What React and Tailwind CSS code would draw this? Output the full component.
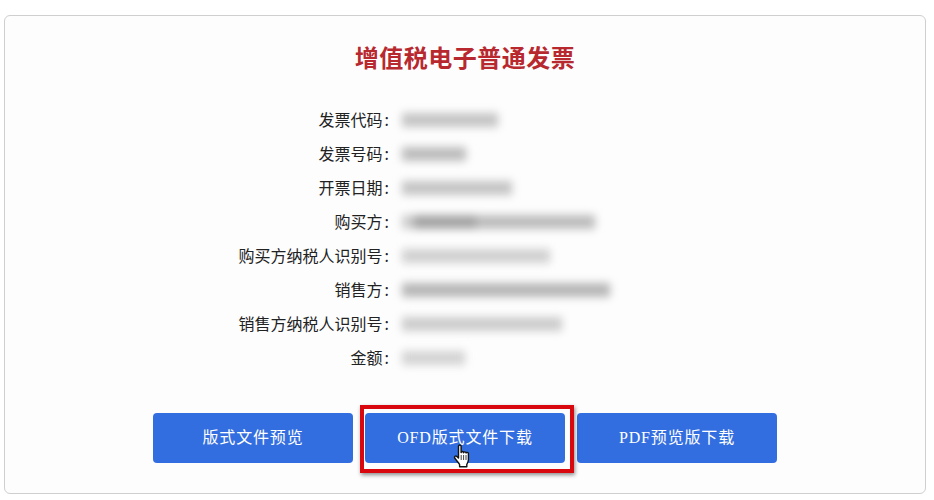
import React from 'react';

const rows = [
  { label: '发票代码', parts: [[96, 'bg-[#c4c4c4]']] },
  { label: '发票号码', parts: [[64, 'bg-[#bcbcbc]']] },
  { label: '开票日期', parts: [[110, 'bg-[#c4c4c4]']] },
  { label: '购买方', parts: [[12, 'bg-[#cccccc]'], [62, 'bg-[#a4a4a4]'], [119, 'bg-[#bcbcbc]']] },
  { label: '购买方纳税人识别号', parts: [[148, 'bg-[#d0d0d0]']] },
  { label: '销售方', parts: [[208, 'bg-[#b6b6b6]']] },
  { label: '销售方纳税人识别号', parts: [[160, 'bg-[#cccccc]']] },
  { label: '金额', parts: [[63, 'bg-[#d3d3d3]']] },
];

function HandCursor() {
  return (
    <svg width="20" height="25" viewBox="0 0 20 25" className="absolute left-[88px] top-[31px] w-[20px] h-[25px]">
      <path
        d="M5.5 2.2c0-1.6 2.6-1.6 2.6 0v6.3c.3-1.400 2.400-1.300 2.500.2.300-1.200 2.300-1.100 2.500.3.400-1 2.200-.8 2.300.6v6.200c0 2-.8 3-1.600 4.600v2.300H6.600v-2.200c-1-1.800-3-3.700-4.900-6.500-.9-1.500 1-2.700 2.200-1.600l1.600 1.700z"
        fill="#fff"
        stroke="#111"
        strokeWidth="1.400"
        strokeLinejoin="round"
      />
      <path d="M8.200 11v5M10.600 11v5M13 11v5" stroke="#111" strokeWidth="0.800" />
    </svg>
  );
}

function ActionButton({ children }) {
  return (
    <button className="w-[200px] h-[50px] rounded-[4px] bg-[#336ee0] text-white text-[16px] tracking-[0.85px] [font-family:'Liberation_Serif','Noto_Sans_CJK_SC',serif]">
      {children}
    </button>
  );
}

export default function App() {
  return (
    <div className="w-[934px] h-[500px] bg-white pt-[15px] pl-[4px] overflow-hidden [font-family:'Noto_Sans_CJK_SC',sans-serif]">
      <div className="w-[922px] h-[479px] rounded-[6px] border border-[#cfcfcf] bg-[#fdfdfe] flex flex-col items-center">
        <h1 className="mt-[26px] h-[34px] leading-[34px] text-[24px] font-bold tracking-[0.5px] text-[#b8292f] [font-family:'Liberation_Serif','Noto_Sans_CJK_SC',serif]">
          增值税电子普通发票
        </h1>

        <div className="mt-[27px] w-full flex flex-col">
          {rows.map(row => (
            <div key={row.label} className="h-[34px] flex items-center">
              <div className="w-[384px] pb-[2px] text-right text-[16px] text-[#222] whitespace-nowrap">
                {row.label}
                <span className="ml-[2px]">:</span>
              </div>
              <div className="ml-[13px] flex blur-[4px]">
                {row.parts.map(([w, bg], i) => (
                  <div key={i} className={`h-[14px] ${bg}`} style={{ width: w }} />
                ))}
              </div>
            </div>
          ))}
        </div>

        {/* buttons */}
        <div className="mt-[38px] flex gap-[12px]">
          <ActionButton>版式文件预览</ActionButton>
          <div className="relative">
            <ActionButton>OFD版式文件下载</ActionButton>
            <div className="absolute -left-[5px] -right-[9px] -top-[8px] -bottom-[10px] border-[4px] border-[#d9080f] shadow-[1px_2px_4px_rgba(0,0,0,0.45)] pointer-events-none" />
            <HandCursor />
          </div>
          <ActionButton>PDF预览版下载</ActionButton>
        </div>
      </div>
    </div>
  );
}
